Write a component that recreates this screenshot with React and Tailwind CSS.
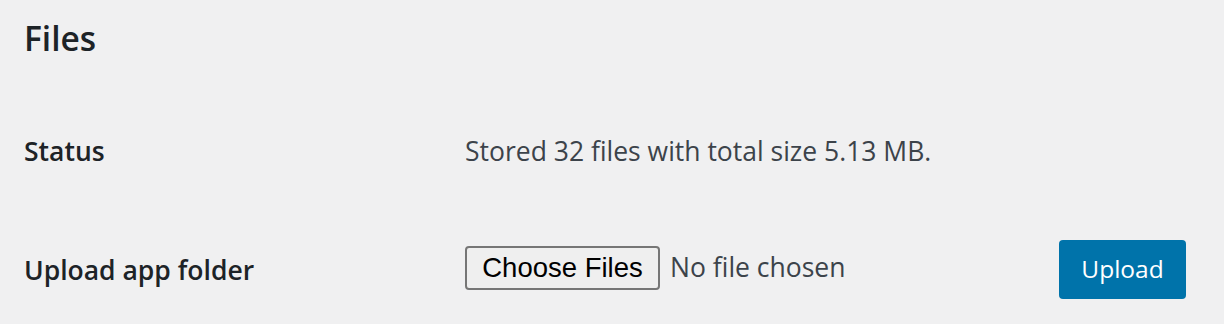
import React from 'react';

const App = () => {
  return (
    <div className="min-h-screen w-full bg-[#f0f0f1] pl-6 pr-[38px] pt-[16px] font-['Open_Sans',sans-serif] text-[#3c434a]">
      <h2 className="text-[33.5px] font-semibold leading-[44px] text-[#1d2327]">Files</h2>

      <div className="mt-[70px] flex items-center h-[44px]">
        <div className="w-[441px] text-[26.5px] font-semibold text-[#1d2327]">Status</div>
        <div className="text-[26.5px]">Stored 32 files with total size 5.13 MB.</div>
      </div>

      <div className="mt-[66px] flex items-center">
        <div className="w-[441px] pt-[2px] text-[26.5px] font-semibold text-[#1d2327]">Upload app folder</div>
        <div className="flex flex-1 items-center justify-between">
          <div className="mb-[3px] flex items-center gap-[10px]">
            <button className="h-[44px] w-[195px] rounded-[4px] border-2 border-[#767676] bg-[#efefef] font-['Liberation_Sans',sans-serif] text-[27.5px] leading-none text-black">
              Choose Files
            </button>
            <span className="text-[26.5px]">No file chosen</span>
          </div>
          <button className="h-[59px] w-[127px] rounded-[4px] bg-[#0073aa] text-[24.5px] text-white">
            Upload
          </button>
        </div>
      </div>
    </div>
  );
};

export default App;
